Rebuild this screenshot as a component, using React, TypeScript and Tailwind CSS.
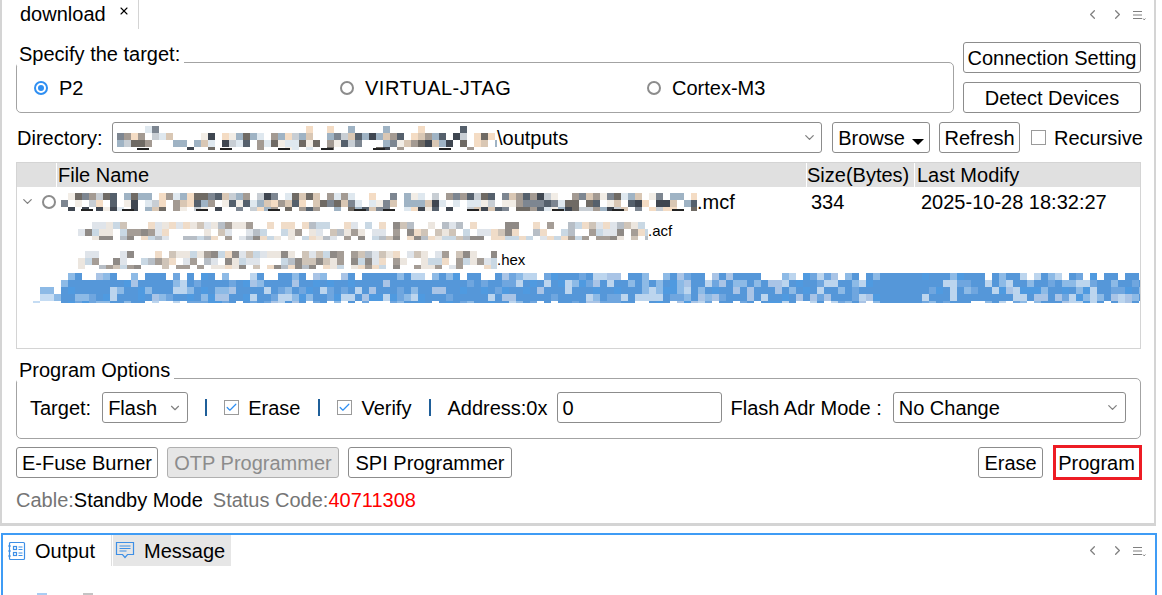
import type { ReactNode } from "react"
import { Check, ChevronDown, ChevronLeft, ChevronRight, X } from "lucide-react"

const lightColors = ["#ffffff", "#ffffff", "#ffffff", "#f2ede6", "#dfe8ef", "#d9c7b4", "#9fb3c4", "#7d8691", "#a39a92", "#f4dcc4", "#55606c", "#c8ced4", "#3f4650", "#6f6a64"]
const paleColors = ["#ffffff", "#ffffff", "#ffffff", "#ece6df", "#dfe4ea", "#cfc4b8", "#b7bec6", "#a59d96", "#f0dcc8", "#c9d8e4", "#8f8a86"]
const blueColors = ["#5597d9", "#5597d9", "#5597d9", "#5597d9", "#5597d9", "#6fa6df", "#8dbae6", "#bcd5ee", "#a9c4e6", "#4f9ae0"]

type MosaicProps = {
    width: number
    height: number
    cell?: number
    seed: number
    colors: string[]
    marks?: boolean
    fade?: number
    edge?: number
    gap?: [number, number]
}

// pixelated filename, same seed gives the same picture every render
const Mosaic = ({ width, height, cell = 7, seed, colors, marks = false, fade = 0, edge = 0, gap }: MosaicProps) => {
    let s = seed
    const next = () => {
        s = (s * 16807) % 2147483647
        return s / 2147483647
    }
    const rects: ReactNode[] = []
    for (let y = 0; y < height; y += cell) {
        const outer = y === 0 || y + cell >= height
        for (let x = 0; x < width; x += cell) {
            let color = colors[Math.floor(next() * colors.length)]
            if (outer && next() < fade) color = "#ffffff"
            if (x < edge) color = next() < 0.55 ? "#ffffff" : next() < 0.5 ? "#c5dcf3" : "#8dbae6"
            if (gap && x >= gap[0] && x < gap[1]) color = colors[0]
            rects.push(<rect key={`${x}-${y}`} x={x} y={y} width={cell} height={cell} fill={color} />)
        }
    }
    if (marks) {
        for (let x = 20; x < width; x += 28 + Math.floor(next() * 60)) {
            rects.push(<rect key={`m${x}`} x={x} y={height - 2} width={12} height={2} fill="#222222" />)
        }
    }
    return (
        <svg width={width} height={height} className="shrink-0" shapeRendering="crispEdges">
            {rects}
        </svg>
    )
}

const Btn = ({ children, className = "" }: { children: ReactNode; className?: string }) => (
    <div className={`h-[31px] shrink-0 flex items-center justify-center rounded-[3px] border border-[#8c8c8c] bg-white text-black ${className}`}>{children}</div>
)

const Radio = ({ label, on = false, className = "", textClass = "" }: { label: string; on?: boolean; className?: string; textClass?: string }) => (
    <div className={`flex items-center gap-[11px] ${className}`}>
        <span className={`w-[14px] h-[14px] rounded-full border-2 flex items-center justify-center ${on ? "border-[#2f8ff2]" : "border-[#8c8c8c]"}`}>
            {on && <span className="w-[6px] h-[6px] rounded-full bg-[#2f8ff2]" />}
        </span>
        <span className={textClass}>{label}</span>
    </div>
)

const CheckBox = ({ label, on = false, className = "", gap = "gap-[9px]" }: { label: string; on?: boolean; className?: string; gap?: string }) => (
    <div className={`flex items-center ${gap} ${className}`}>
        <span className="w-[15px] h-[15px] border border-[#9a9a9a] flex items-center justify-center">
            {on && <Check className="w-[13px] h-[13px] text-[#2f8ff2]" strokeWidth={2.2} />}
        </span>
        <span>{label}</span>
    </div>
)

const Group = ({ title, className = "", children }: { title: string; className?: string; children: ReactNode }) => (
    <div className={`relative rounded-[5px] border border-[#a3a3a3] ${className}`}>
        <span className="absolute left-0 top-[-21px] h-[24px] leading-[24px] pl-[2px] pr-[4px] bg-white">{title}</span>
        {children}
    </div>
)

const PaneTools = () => (
    <div className="flex items-center text-[#808080]">
        <ChevronLeft className="w-[15px] h-[15px]" strokeWidth={2} />
        <ChevronRight className="w-[15px] h-[15px] ml-[10px]" strokeWidth={2} />
        <svg width="14" height="12" viewBox="0 0 14 12" className="ml-[7px] mt-[3px]" fill="none" stroke="#808080">
            <path d="M1 1.5h9M1 5h9M1 8.5h9" />
            <path d="M11 8.5l1.2 1.4L13.4 8.5" />
        </svg>
    </div>
)

const Sep = ({ className = "" }: { className?: string }) => <span className={`w-[2px] h-[17px] bg-[#1f5f99] ${className}`} />

const OutputIcon = () => (
    <svg width="20" height="20" viewBox="0 0 20 20" fill="none" stroke="#3d8fe6" strokeWidth="1.2">
        <rect x="2.5" y="1.5" width="15" height="17" rx="1" />
        <path d="M1 5h3M1 10h3M1 15h3" />
        <rect x="6.5" y="5.5" width="3" height="3" />
        <rect x="6.5" y="11.5" width="3" height="3" />
        <path d="M11.5 6h4M11.5 8.5h4M11.5 12h4M11.5 14.5h4" />
    </svg>
)

const MessageIcon = () => (
    <svg width="20" height="20" viewBox="0 0 20 20" fill="none" stroke="#3d8fe6" strokeWidth="1.2">
        <path d="M1.5 1.5h17v12h-6l-2.5 3-2.5-3h-6z" />
        <path d="M4.5 5h11M4.5 7.5h11M4.5 10h7" />
    </svg>
)

export default function App() {
    return (
        <div className="w-[1162px] h-[595px] overflow-hidden bg-white text-black text-[20px] leading-[24px] flex flex-col" style={{ fontFamily: '"Liberation Sans", Arial, sans-serif' }}>
            <div className="w-[1156px] h-[526px] shrink-0 border-l-2 border-r-2 border-b-[3px] border-[#d4d4d4] flex flex-col">
                {/* tab strip */}
                <div className="h-[29px] shrink-0 flex items-start justify-between pr-[8px]">
                    <div className="w-[137px] h-[29px] border-r border-[#d4d4d4] pl-[18px] pt-[2px] flex items-start relative">
                        <span>download</span>
                        <X className="absolute left-[116px] top-[5px] w-[12px] h-[12px]" strokeWidth={2.2} />
                    </div>
                    <div className="pt-[7px]">
                        <PaneTools />
                    </div>
                </div>

                <div className="pl-[14px] pr-[13px] flex flex-col">
                    {/* target */}
                    <div className="flex justify-between pt-[13px]">
                        <Group title="Specify the target:" className="w-[938px] h-[51px] mt-[20px] flex items-center pl-[17px] pt-[1px]">
                            <Radio label="P2" on className="w-[306px]" />
                            <Radio label="VIRTUAL-JTAG" className="w-[307px]" textClass="tracking-[0.5px]" />
                            <Radio label="Cortex-M3" />
                        </Group>
                        <div className="w-[178px] flex flex-col gap-[9px]">
                            <Btn>Connection Setting</Btn>
                            <Btn>Detect Devices</Btn>
                        </div>
                    </div>

                    {/* directory */}
                    <div className="flex items-center mt-[9px] h-[31px]">
                        <span className="w-[96px] shrink-0 pl-[1px]">Directory:</span>
                        <Btn className="w-[710px] !justify-start pl-[4px] pr-[4px]">
                            <Mosaic width={380} height={24} seed={77} colors={lightColors} marks fade={0.8} />
                            <span>\outputs</span>
                            <ChevronDown className="ml-auto w-[15px] h-[15px] text-[#808080]" />
                        </Btn>
                        <Btn className="w-[98px] ml-[10px] gap-[7px]">
                            <span>Browse</span>
                            <span className="mt-[9px] w-0 h-0 border-x-[6px] border-t-[6px] border-x-transparent border-t-black" />
                        </Btn>
                        <Btn className="w-[81px] ml-[9px]">Refresh</Btn>
                        <CheckBox label="Recursive" className="ml-[11px]" gap="gap-[8px]" />
                    </div>

                    {/* file table */}
                    <div className="mt-[9px] h-[187px] border border-[#d4d4d4] overflow-hidden">
                        <div className="h-[24px] bg-[#e0e0e0] flex">
                            <div className="w-[40px] border-r border-white" />
                            <div className="w-[750px] pl-[1px] border-r border-white">File Name</div>
                            <div className="w-[108px] border-r border-white whitespace-nowrap">Size(Bytes)</div>
                            <div className="pl-[2px]">Last Modify</div>
                        </div>
                        <div className="h-[29px] flex items-center">
                            <ChevronDown className="ml-[3px] w-[15px] h-[15px] text-[#808080]" />
                            <span className="ml-[7px] w-[14px] h-[14px] rounded-full border-2 border-[#8c8c8c]" />
                            <span className="ml-[5px] w-[745px] flex items-center">
                                <Mosaic width={636} height={18} seed={4242} colors={lightColors} marks />
                                <span>.mcf</span>
                            </span>
                            <span className="w-[110px] pl-[5px]">334</span>
                            <span className="pl-[5px]">2025-10-28 18:32:27</span>
                        </div>
                        <div className="h-[29px] flex items-center pl-[61px] text-[15px]">
                            <Mosaic width={570} height={18} seed={9001} colors={paleColors} />
                            <span>.acf</span>
                        </div>
                        <div className="h-[29px] flex items-center pl-[61px] text-[15px]">
                            <Mosaic width={419} height={18} seed={1234} colors={paleColors} />
                            <span>.hex</span>
                        </div>
                        <div className="h-[30px] pl-[16px] mt-[-1px]">
                            <Mosaic width={1107} height={30} seed={555} colors={blueColors} fade={0.2} edge={28} gap={[845, 885]} />
                        </div>
                    </div>

                    {/* options */}
                    <Group title="Program Options" className="h-[61px] mt-[29px] flex items-center pl-[13px] pb-[2px]">
                        <span>Target:</span>
                        <Btn className="w-[86px] ml-[11px] !justify-between pl-[5px] pr-[5px]">
                            Flash
                            <ChevronDown className="w-[14px] h-[14px] text-[#808080]" />
                        </Btn>
                        <Sep className="ml-[17px]" />
                        <CheckBox label="Erase" on className="ml-[17px]" />
                        <Sep className="ml-[18px]" />
                        <CheckBox label="Verify" on className="ml-[17px]" />
                        <Sep className="ml-[18px]" />
                        <span className="ml-[16px]">Address:0x</span>
                        <Btn className="w-[165px] ml-[9px] !justify-start pl-[5px]">0</Btn>
                        <span className="ml-[9px] whitespace-nowrap">Flash Adr Mode :</span>
                        <Btn className="w-[233px] ml-[11px] !justify-between pl-[5px] pr-[5px]">
                            No Change
                            <ChevronDown className="w-[15px] h-[15px] text-[#808080]" />
                        </Btn>
                    </Group>

                    {/* actions */}
                    <div className="flex items-center mt-[8px] h-[31px]">
                        <Btn className="w-[142px]">E-Fuse Burner</Btn>
                        <Btn className="w-[172px] ml-[9px] !bg-[#e6e6e6] !text-[#8c8c8c] !border-[#b0b0b0]">OTP Programmer</Btn>
                        <Btn className="w-[164px] ml-[9px]">SPI Programmer</Btn>
                        <Btn className="w-[65px] ml-auto">Erase</Btn>
                        <Btn className="w-[89px] ml-[10px] mr-[-1px] pr-[2px] !h-[35px] !rounded-none !border-[3px] !border-[#ed1c24]">Program</Btn>
                    </div>

                    {/* status */}
                    <div className="mt-[10px] flex items-center">
                        <span className="text-[#757575]">Cable:</span>
                        <span>Standby Mode</span>
                        <span className="text-[#757575] ml-[10px]">Status Code:</span>
                        <span className="text-[#ff0000]">40711308</span>
                    </div>
                </div>
            </div>

            {/* bottom pane */}
            <div className="mt-[7px] ml-[1px] w-[1156px] flex-1 border-x-2 border-t-2 border-[#3f9cf5] flex flex-col overflow-hidden">
                <div className="h-[31px] shrink-0 flex items-center justify-between pr-[9px]">
                    <div className="flex h-full">
                        <div className="w-[109px] flex items-center gap-[8px] pl-[4px] border-r border-[#e0e0e0]">
                            <OutputIcon />
                            <span>Output</span>
                        </div>
                        <div className="w-[118px] ml-[1px] bg-[#e6e6e6] flex items-center gap-[9px] pl-[2px]">
                            <MessageIcon />
                            <span>Message</span>
                        </div>
                    </div>
                    <PaneTools />
                </div>
                <div className="flex pl-[34px] pt-[27px] gap-[36px]">
                    <span className="w-[10px] h-[4px] bg-[#a9cdf3]" />
                    <span className="w-[10px] h-[4px] bg-[#c4c4c4]" />
                </div>
            </div>
        </div>
    )
}
